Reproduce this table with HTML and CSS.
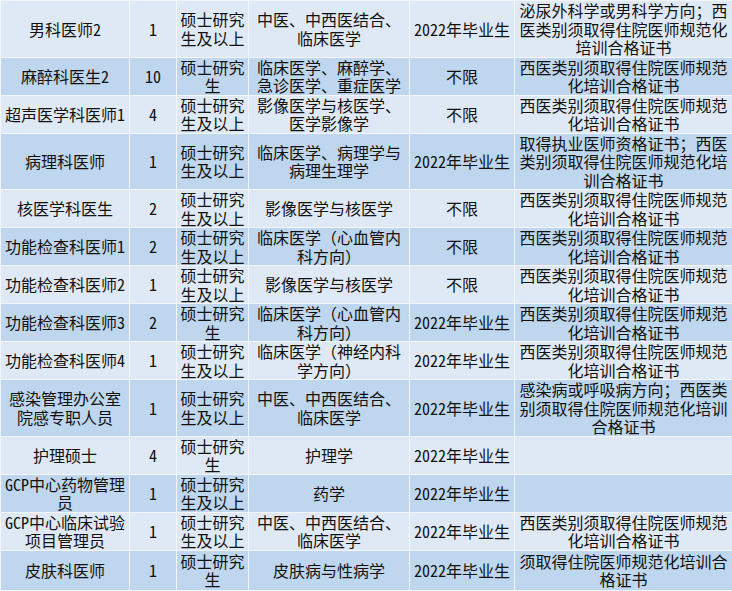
FILE: index.html
```html
<!DOCTYPE html>
<html lang="zh-CN">
<head>
<meta charset="utf-8">
<title>招聘岗位表</title>
<link rel="stylesheet" href="styles.css">
</head>
<body>
<table class="jobs">
  <colgroup>
    <col class="c1"><col class="c2"><col class="c3"><col class="c4"><col class="c5"><col class="c6">
  </colgroup>
  <tbody>
    <tr class="lt r3"><td>男科医师2</td><td>1</td><td>硕士研究生及以上</td><td>中医、中西医结合、临床医学</td><td>2022年毕业生</td><td>泌尿外科学或男科学方向；西医类别须取得住院医师规范化培训合格证书</td></tr>
    <tr class="dk r2"><td>麻醉科医生2</td><td>10</td><td>硕士研究生</td><td>临床医学、麻醉学、急诊医学、重症医学</td><td>不限</td><td>西医类别须取得住院医师规范化培训合格证书</td></tr>
    <tr class="lt r2"><td>超声医学科医师1</td><td>4</td><td>硕士研究生及以上</td><td>影像医学与核医学、医学影像学</td><td>不限</td><td>西医类别须取得住院医师规范化培训合格证书</td></tr>
    <tr class="dk r3"><td>病理科医师</td><td>1</td><td>硕士研究生及以上</td><td>临床医学、病理学与病理生理学</td><td>2022年毕业生</td><td>取得执业医师资格证书；西医类别须取得住院医师规范化培训合格证书</td></tr>
    <tr class="lt r2"><td>核医学科医生</td><td>2</td><td>硕士研究生及以上</td><td>影像医学与核医学</td><td>不限</td><td>西医类别须取得住院医师规范化培训合格证书</td></tr>
    <tr class="dk r2"><td>功能检查科医师1</td><td>2</td><td>硕士研究生及以上</td><td>临床医学（心血管内科方向）</td><td>不限</td><td>西医类别须取得住院医师规范化培训合格证书</td></tr>
    <tr class="lt r2"><td>功能检查科医师2</td><td>1</td><td>硕士研究生及以上</td><td>影像医学与核医学</td><td>不限</td><td>西医类别须取得住院医师规范化培训合格证书</td></tr>
    <tr class="dk r2"><td>功能检查科医师3</td><td>2</td><td>硕士研究生</td><td>临床医学（心血管内科方向）</td><td>2022年毕业生</td><td>西医类别须取得住院医师规范化培训合格证书</td></tr>
    <tr class="lt r2"><td>功能检查科医师4</td><td>1</td><td>硕士研究生及以上</td><td>临床医学（神经内科学方向）</td><td>2022年毕业生</td><td>西医类别须取得住院医师规范化培训合格证书</td></tr>
    <tr class="dk r3"><td>感染管理办公室院感专职人员</td><td>1</td><td>硕士研究生及以上</td><td>中医、中西医结合、临床医学</td><td>2022年毕业生</td><td>感染病或呼吸病方向；西医类别须取得住院医师规范化培训合格证书</td></tr>
    <tr class="lt r2"><td>护理硕士</td><td>4</td><td>硕士研究生</td><td>护理学</td><td>2022年毕业生</td><td></td></tr>
    <tr class="dk r2"><td>GCP中心药物管理员</td><td>1</td><td>硕士研究生及以上</td><td>药学</td><td>2022年毕业生</td><td></td></tr>
    <tr class="lt r2"><td>GCP中心临床试验项目管理员</td><td>1</td><td>硕士研究生及以上</td><td>中医、中西医结合、临床医学</td><td>2022年毕业生</td><td>西医类别须取得住院医师规范化培训合格证书</td></tr>
    <tr class="dk r4"><td>皮肤科医师</td><td>1</td><td>硕士研究生</td><td>皮肤病与性病学</td><td>2022年毕业生</td><td>须取得住院医师规范化培训合格证书</td></tr>
  </tbody>
</table>
</body>
</html>
```

FILE: styles.css
```css
html, body {
  margin: 0;
  padding: 0;
  background: #dfe9f5;
}

.jobs {
  width: 732px;
  table-layout: fixed;
  border-collapse: collapse;
  border-top: 1px solid #a7bdd3;
  font-family: "Noto Sans Mono CJK SC", "Noto Sans CJK SC", "Noto Sans", sans-serif;
  font-size: 16px;
  line-height: 18.5px;
  color: #111;
}

.c1 { width: 129px; }
.c2 { width: 47px; }
.c3 { width: 72px; }
.c4 { width: 161px; }
.c5 { width: 105px; }
.c6 { width: 218px; }

.jobs td {
  border: 1px solid #f3f7fb;
  padding: 0 1px;
  text-align: center;
  vertical-align: middle;
  overflow: hidden;
}

.jobs tr.lt td { background: #dfe9f5; }
.jobs tr.dk td { background: #bed6ee; }

.r2 td { height: 37px; }
.r3 td { height: 55px; }
.r4 td { height: 39px; }
```
